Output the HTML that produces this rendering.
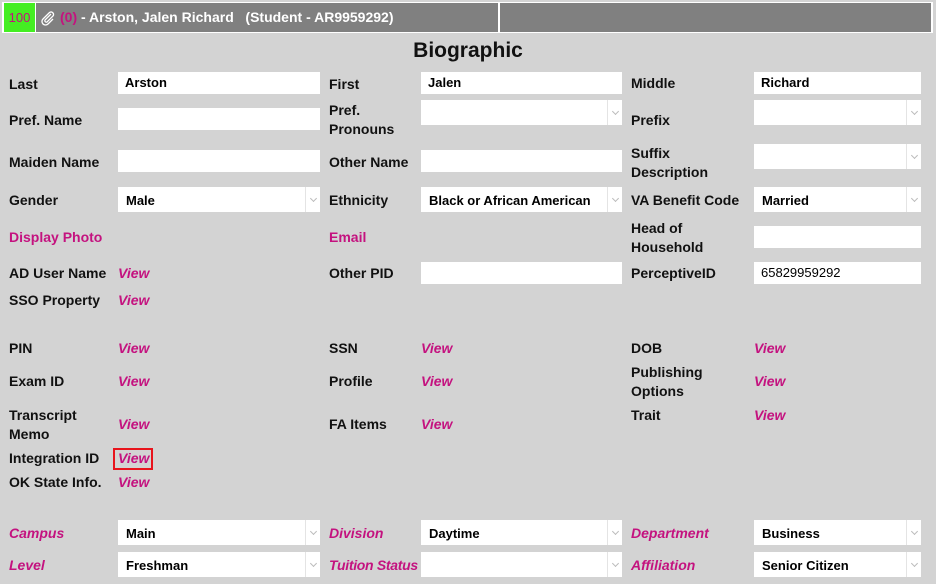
<!DOCTYPE html>
<html><head><meta charset="utf-8"><style>
body{margin:0;width:936px;height:584px;background:#d3d3d3;font-family:"Liberation Sans",sans-serif;position:relative;overflow:hidden;font-weight:bold;color:#111}
.a{position:absolute}
.l{position:absolute;font-size:14px;line-height:19px;white-space:nowrap}
.m{color:#c4127f}
.i{font-style:italic}
.in{position:absolute;background:#fff;height:22px;font-size:13px;line-height:22px;padding-left:7px;box-sizing:border-box;color:#000}
.s{position:absolute;background:#fff;height:25px;font-size:13px;line-height:27px;padding-left:8px;box-sizing:border-box;color:#000}
.s:after{content:"";position:absolute;right:14px;top:0;bottom:0;width:1px;background:#e4e4e4}
.s:before{content:"";position:absolute;right:4px;top:9px;width:4px;height:4px;border-right:1px solid #bbb;border-bottom:1px solid #bbb;transform:rotate(45deg)}
</style></head><body>
<div class="a" style="left:2px;top:2px;width:931px;height:31px;background:#fff"></div>
<div class="a" style="left:4px;top:3px;width:31px;height:29px;background:#44ee22;color:#c4127f;font-size:13px;line-height:29px;text-align:center;font-weight:normal">100</div>
<div class="a" style="left:36px;top:3px;width:462px;height:29px;background:#808080"></div>
<div class="a" style="left:500px;top:3px;width:431px;height:29px;background:#808080"></div>
<svg class="a" style="left:40px;top:10px" width="16" height="16" viewBox="0 0 16 16"><path d="M11 4 L5 10 a1.5 1.5 0 0 0 2 2 L13 6 a2.5 2.5 0 0 0 -3.5 -3.5 L3 9 a3.5 3.5 0 0 0 5 5 L13 9" fill="none" stroke="#fff" stroke-width="1.3"/></svg>
<div class="a" style="left:60px;top:8px;font-size:14px;line-height:19px;color:#fff"><span class="m">(0)</span> - Arston, Jalen Richard&nbsp;&nbsp; (Student - AR9959292)</div>
<div class="a" style="left:0;width:936px;top:38px;text-align:center;font-size:21px;line-height:26px">Biographic</div>

<div class="l" style="left:9px;top:75px">Last</div>
<div class="in" style="left:118px;top:72px;width:202px">Arston</div>
<div class="l" style="left:329px;top:75px">First</div>
<div class="in" style="left:421px;top:72px;width:201px">Jalen</div>
<div class="l" style="left:631px;top:74px">Middle</div>
<div class="in" style="left:754px;top:72px;width:167px">Richard</div>

<div class="l" style="left:9px;top:111px">Pref. Name</div>
<div class="in" style="left:118px;top:108px;width:202px"></div>
<div class="l" style="left:329px;top:101px">Pref.<br>Pronouns</div>
<div class="s" style="left:421px;top:100px;width:201px"></div>
<div class="l" style="left:631px;top:111px">Prefix</div>
<div class="s" style="left:754px;top:100px;width:167px"></div>

<div class="l" style="left:9px;top:153px">Maiden Name</div>
<div class="in" style="left:118px;top:150px;width:202px"></div>
<div class="l" style="left:329px;top:153px">Other Name</div>
<div class="in" style="left:421px;top:150px;width:201px"></div>
<div class="l" style="left:631px;top:144px">Suffix<br>Description</div>
<div class="s" style="left:754px;top:144px;width:167px"></div>

<div class="l" style="left:9px;top:191px">Gender</div>
<div class="s" style="left:118px;top:187px;width:202px">Male</div>
<div class="l" style="left:329px;top:191px">Ethnicity</div>
<div class="s" style="left:421px;top:187px;width:201px">Black or African American</div>
<div class="l" style="left:631px;top:191px">VA Benefit Code</div>
<div class="s" style="left:754px;top:187px;width:167px">Married</div>

<div class="l m" style="left:9px;top:228px">Display Photo</div>
<div class="l m" style="left:329px;top:228px">Email</div>
<div class="l" style="left:631px;top:219px">Head of<br>Household</div>
<div class="in" style="left:754px;top:226px;width:167px"></div>

<div class="l" style="left:9px;top:264px">AD User Name</div>
<div class="l m i" style="left:118px;top:264px">View</div>
<div class="l" style="left:329px;top:264px">Other PID</div>
<div class="in" style="left:421px;top:262px;width:201px"></div>
<div class="l" style="left:631px;top:264px">PerceptiveID</div>
<div class="in" style="left:754px;top:262px;width:167px;font-weight:normal">65829959292</div>

<div class="l" style="left:9px;top:291px">SSO Property</div>
<div class="l m i" style="left:118px;top:291px">View</div>

<div class="l" style="left:9px;top:339px">PIN</div>
<div class="l m i" style="left:118px;top:339px">View</div>
<div class="l" style="left:329px;top:339px">SSN</div>
<div class="l m i" style="left:421px;top:339px">View</div>
<div class="l" style="left:631px;top:339px">DOB</div>
<div class="l m i" style="left:754px;top:339px">View</div>

<div class="l" style="left:9px;top:372px">Exam ID</div>
<div class="l m i" style="left:118px;top:372px">View</div>
<div class="l" style="left:329px;top:372px">Profile</div>
<div class="l m i" style="left:421px;top:372px">View</div>
<div class="l" style="left:631px;top:363px">Publishing<br>Options</div>
<div class="l m i" style="left:754px;top:372px">View</div>

<div class="l" style="left:9px;top:406px">Transcript<br>Memo</div>
<div class="l m i" style="left:118px;top:415px">View</div>
<div class="l" style="left:329px;top:415px">FA Items</div>
<div class="l m i" style="left:421px;top:415px">View</div>
<div class="l" style="left:631px;top:406px">Trait</div>
<div class="l m i" style="left:754px;top:406px">View</div>

<div class="l" style="left:9px;top:449px">Integration ID</div>
<div class="a" style="left:113px;top:448px;width:36px;height:18px;border:2px solid #e8141c"></div>
<div class="l m i" style="left:118px;top:449px">View</div>
<div class="l" style="left:9px;top:473px">OK State Info.</div>
<div class="l m i" style="left:118px;top:473px">View</div>

<div class="l m i" style="left:9px;top:524px">Campus</div>
<div class="s" style="left:118px;top:520px;width:202px">Main</div>
<div class="l m i" style="left:329px;top:524px">Division</div>
<div class="s" style="left:421px;top:520px;width:201px">Daytime</div>
<div class="l m i" style="left:631px;top:524px">Department</div>
<div class="s" style="left:754px;top:520px;width:167px">Business</div>

<div class="l m i" style="left:9px;top:556px">Level</div>
<div class="s" style="left:118px;top:552px;width:202px">Freshman</div>
<div class="l m i" style="left:329px;top:556px;letter-spacing:-0.3px">Tuition Status</div>
<div class="s" style="left:421px;top:552px;width:201px"></div>
<div class="l m i" style="left:631px;top:556px">Affiliation</div>
<div class="s" style="left:754px;top:552px;width:167px">Senior Citizen</div>
</body></html>
